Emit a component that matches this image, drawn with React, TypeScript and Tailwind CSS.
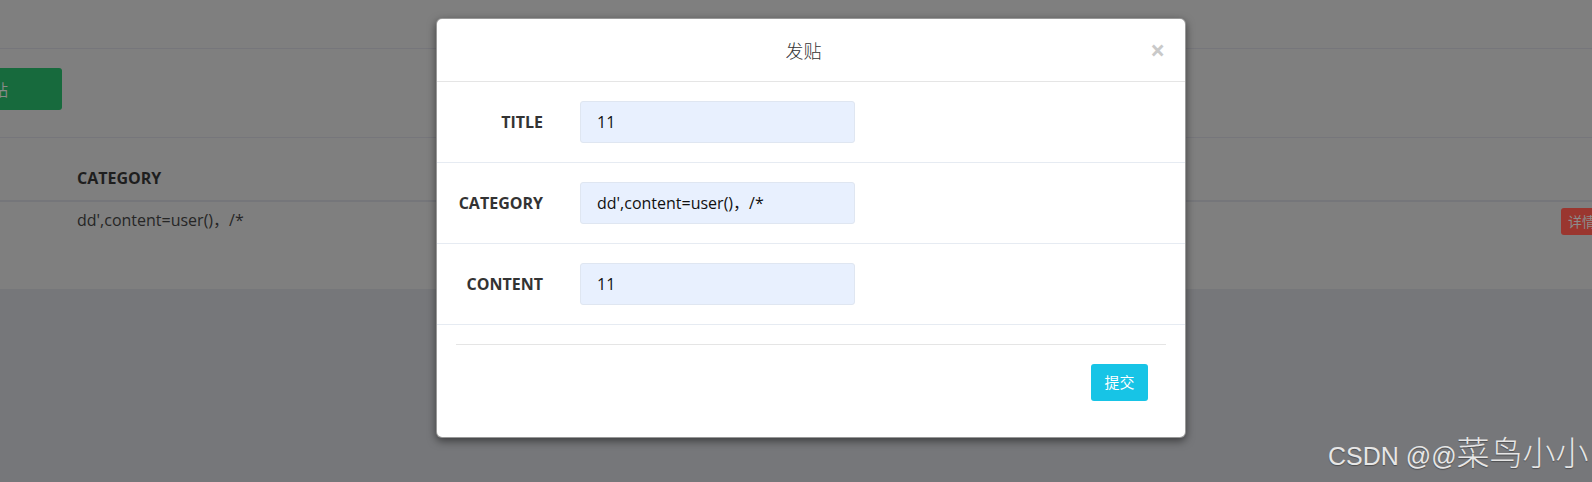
import React from 'react';

const fields = [
  { label: 'TITLE', value: '11' },
  { label: 'CATEGORY', value: "dd',content=user()，/*" },
  { label: 'CONTENT', value: '11' }
];

function PostModal() {
  return (
    <div className="absolute left-[436px] top-[18px] w-[750px] rounded-[6px] border border-black/40 bg-white shadow-[0_3px_9px_rgba(0,0,0,0.5)]">
      <div className="flex h-[63px] items-center border-b border-[#e5e5e5] px-[20px]">
        <h4 className="flex-1 text-center font-['Noto_Sans_CJK_SC',sans-serif] text-[18px] font-light leading-none text-[#333]">发贴</h4>
        <button className="font-['Open_Sans',sans-serif] text-[26px] font-bold leading-none text-[#c9c9c9]">×</button>
      </div>

      {fields.map((field) => (
        <div key={field.label} className="flex h-[81px] items-center border-b border-[#e6ebf2]">
          <label className="w-[106px] text-right text-[16px] font-bold text-[#333]">{field.label}</label>
          <div className="ml-[37px] flex h-[42px] w-[275px] items-center rounded-[3px] border border-[#dfe6f1] bg-[#e8f0fe] pl-[16px] text-[16px] text-[#111]">
            {field.value}
          </div>
        </div>
      ))}

      <div className="px-[19px] pb-[36px] pt-[19px]">
        <div className="border-t border-[#e5e5e5]" />
        <div className="flex justify-end pr-[18px] pt-[19px]">
          <button className="h-[37px] w-[57px] rounded-[3px] bg-[#17c4e6] font-['Noto_Sans_CJK_SC',sans-serif] text-[15px] text-white">提交</button>
        </div>
      </div>
    </div>
  );
}

export default function App() {
  return (
    <div className="relative h-[482px] w-[1592px] overflow-hidden bg-[#76777a] font-['Open_Sans','Noto_Sans_CJK_SC',sans-serif]">
      <div className="h-[289px] bg-[#7f7f7f]">
        <div className="h-[49px] border-b border-[#76767b]" />
        <div className="h-[89px] border-b border-[#76767b] pt-[19px]">
          <button className="ml-[-78px] flex h-[42px] w-[140px] items-center justify-center rounded-[3px] bg-[#176a3d] font-['Noto_Sans_CJK_SC',sans-serif] text-[16px] text-[#8a8a8a]">
            发贴
          </button>
        </div>
        <div className="h-[64px] border-b-2 border-[#75767a] pl-[77px] pt-[29px] text-[16px] font-bold leading-[22px] text-[#1e1e1e]">CATEGORY</div>
        <div className="flex pt-[6px]">
          <div className="w-[1561px] shrink-0 pl-[77px] pt-[1px] text-[16px] leading-[22px] text-[#262626]">dd',content=user()，/*</div>
          <button className="h-[27px] w-[50px] shrink-0 rounded-[3px] bg-[#9a362f] pl-[7px] text-left font-['Noto_Sans_CJK_SC',sans-serif] text-[14px] text-[#8c8c8c]">
            详情
          </button>
        </div>
      </div>

      <PostModal />

      <div className="absolute left-[1328px] top-[435px] flex items-baseline whitespace-nowrap font-['Liberation_Sans',sans-serif] text-[25px] leading-none text-[#e6e6e6] [text-shadow:0_1px_1px_rgba(0,0,0,0.35)]">
        <span>CSDN @@</span>
        <span className="font-['Noto_Sans_CJK_SC',sans-serif] text-[33px] font-light">菜鸟小小</span>
      </div>
    </div>
  );
}
